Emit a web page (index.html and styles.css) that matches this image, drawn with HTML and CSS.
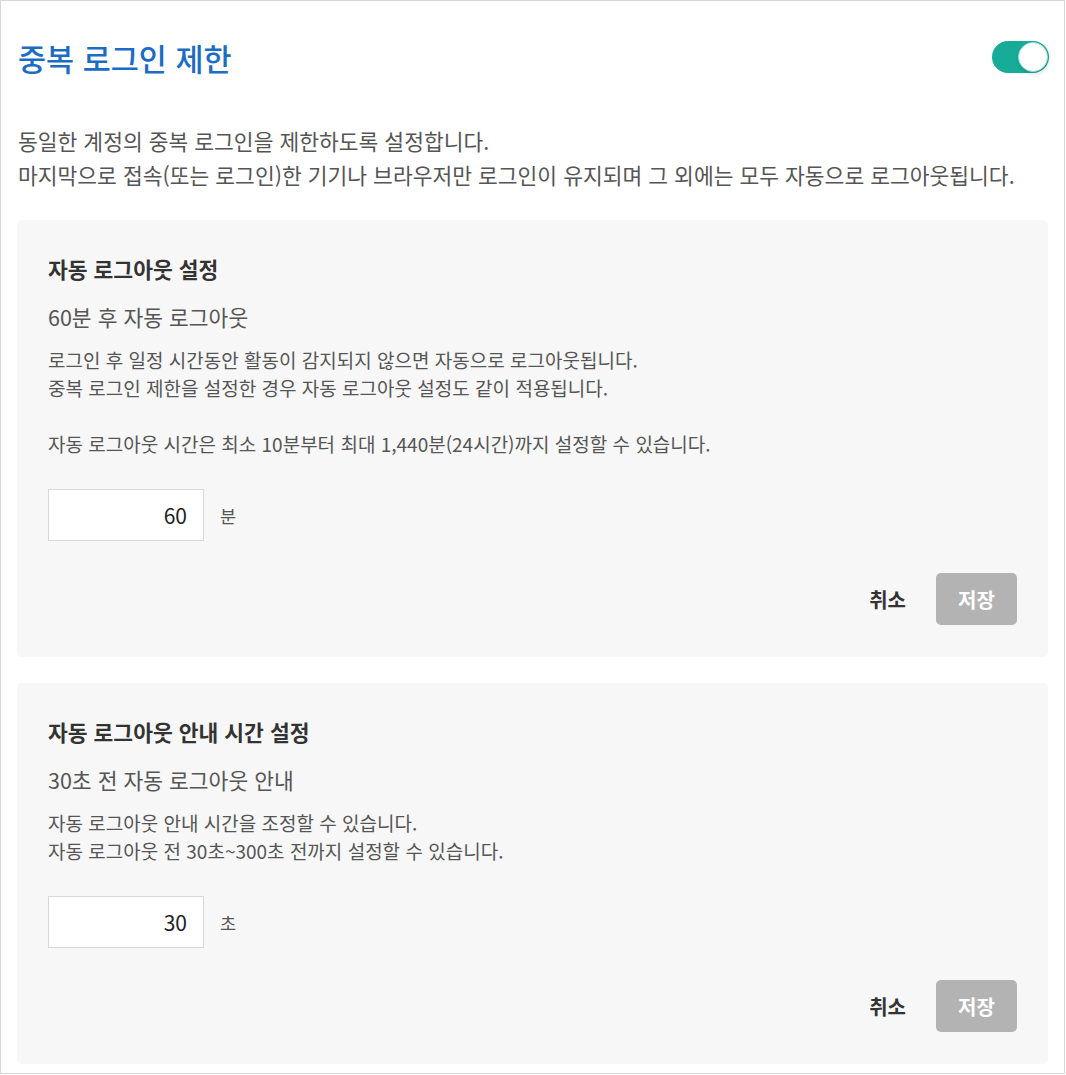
FILE: index.html
```html
<!DOCTYPE html>
<html lang="ko">
<head>
<meta charset="utf-8">
<title>중복 로그인 제한</title>
<link rel="stylesheet" href="styles.css">
</head>
<body>
<div class="frame">
  <header class="top">
    <h1 class="title">중복 로그인 제한</h1>
    <span class="toggle"><span class="knob"></span></span>
  </header>
  <p class="intro">동일한 계정의 중복 로그인을 제한하도록 설정합니다.<br>마지막으로 접속(또는 로그인)한 기기나 브라우저만 로그인이 유지되며 그 외에는 모두 자동으로 로그아웃됩니다.</p>

  <section class="card">
    <h2 class="card-title">자동 로그아웃 설정</h2>
    <p class="card-sub">60분 후 자동 로그아웃</p>
    <p class="card-desc">로그인 후 일정 시간동안 활동이 감지되지 않으면 자동으로 로그아웃됩니다.<br>중복 로그인 제한을 설정한 경우 자동 로그아웃 설정도 같이 적용됩니다.<br><br>자동 로그아웃 시간은 최소 10분부터 최대 1,440분(24시간)까지 설정할 수 있습니다.</p>
    <div class="field"><span class="input">60</span><span class="unit">분</span></div>
    <div class="actions"><span class="cancel">취소</span><span class="save">저장</span></div>
  </section>

  <section class="card card2">
    <h2 class="card-title">자동 로그아웃 안내 시간 설정</h2>
    <p class="card-sub">30초 전 자동 로그아웃 안내</p>
    <p class="card-desc">자동 로그아웃 안내 시간을 조정할 수 있습니다.<br>자동 로그아웃 전 30초~300초 전까지 설정할 수 있습니다.</p>
    <div class="field"><span class="input">30</span><span class="unit">초</span></div>
    <div class="actions"><span class="cancel">취소</span><span class="save">저장</span></div>
  </section>
</div>
</body>
</html>
```
FILE: styles.css
```css
* { box-sizing: border-box; }
html, body { margin: 0; padding: 0; background: #fff; }
body { font-family: "Noto Sans CJK KR", "Noto Sans", sans-serif; color: #333; }
.frame {
  width: 1065px;
  height: 1074px;
  border: 1px solid #d6d6d6;
  padding: 0 16px 0 16px;
}
.top {
  display: flex;
  justify-content: space-between;
  align-items: center;
  padding-top: 38px;
  height: 76px;
}
.title {
  margin: 0 0 0 1px;
  font-size: 30.5px;
  line-height: 38px;
  font-weight: 500;
  color: #1b6cc4;
}
.toggle {
  width: 57px;
  height: 32px;
  border-radius: 16px;
  background: #16ac98;
  display: flex;
  justify-content: flex-end;
  align-items: center;
  padding: 1px;
  margin-right: -1px;
  margin-top: -2px;
}
.knob {
  width: 30px;
  height: 30px;
  border-radius: 50%;
  background: #fff;
  border: 1px solid #9fdcd3;
  box-shadow: 1px 2px 4px rgba(0,0,0,0.15);
}
.intro {
  margin: 47px 0 0 1px;
  font-size: 21.5px;
  line-height: 34px;
  color: #555;
}
.card {
  margin-top: 28px;
  background: #f7f7f7;
  border-radius: 5px;
  padding: 35px 31px 32px 31px;
}
.card2 { margin-top: 26px; }
.card-title {
  margin: 0;
  font-size: 21.5px;
  line-height: 28px;
  font-weight: 700;
  color: #333;
}
.card-sub {
  margin: 20px 0 0;
  font-size: 21.5px;
  line-height: 28px;
  color: #555;
}
.card-desc {
  margin: 15px 0 0;
  font-size: 19px;
  line-height: 28px;
  color: #555;
}
.field {
  margin-top: 31px;
  display: flex;
  align-items: center;
}
.input {
  width: 156px;
  height: 52px;
  background: #fff;
  border: 1px solid #d8d8d8;
  font-size: 21px;
  color: #222;
  display: flex;
  align-items: center;
  justify-content: flex-end;
  padding-right: 16px;
}
.unit {
  margin-left: 16px;
  font-size: 17.5px;
  color: #555;
}
.actions {
  margin-top: 32px;
  display: flex;
  justify-content: flex-end;
  align-items: center;
}
.cancel {
  font-size: 20px;
  font-weight: 700;
  color: #333;
  margin-right: 30px;
}
.save {
  width: 81px;
  height: 52px;
  border-radius: 5px;
  background: #b3b3b3;
  color: #fff;
  font-size: 20px;
  font-weight: 700;
  display: flex;
  align-items: center;
  justify-content: center;
}
```
